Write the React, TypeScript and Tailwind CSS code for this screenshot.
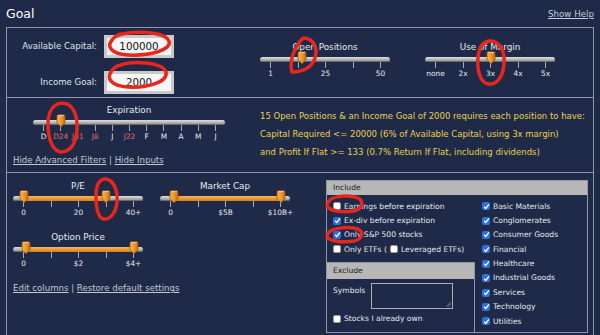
import React from "react";

type Label = { at: number; text: string; red?: boolean };

type SliderProps = {
  title: string;
  w: string;
  width: number;
  ticks: number;
  labels: Label[];
  knobs: number[];
  fill?: [number, number];
};

function Knob({ left }: { left: number }) {
  return (
    <svg
      width="10"
      height="14"
      viewBox="0 0 10 14"
      className="absolute top-[-2px]"
      style={{ left: left - 5 }}
    >
      <defs>
        <linearGradient id="knob" x1="0" y1="0" x2="1" y2="0">
          <stop offset="0" stopColor="#f6b550" />
          <stop offset="0.5" stopColor="#f0982c" />
          <stop offset="1" stopColor="#c86d12" />
        </linearGradient>
      </defs>
      <path
        d="M1 2 Q1 0.8 2.2 0.8 H7.8 Q9 0.8 9 2 V8.6 L5 12.8 L1 8.6 Z"
        fill="url(#knob)"
        stroke="#9a5410"
        strokeWidth="0.8"
      />
      <path d="M2 1.6 H8" stroke="#fbd79a" strokeWidth="0.8" />
    </svg>
  );
}

function Slider({ title, w, width, ticks, labels, knobs, fill }: SliderProps) {
  const step = (width - 20) / (ticks - 1);
  const tickX = Array.from({ length: ticks }, (_, i) => 10 + i * step);
  return (
    <div className={`flex flex-col ${w}`}>
      <div className="h-[12px] text-center text-[8.8px] leading-[12px] text-[#e6e9ef]">
        {title}
      </div>
      <div className="relative h-[28px]">
        <div className="absolute left-0 right-0 top-[4px] h-[5px] rounded-full bg-linear-to-b from-[#e0e0e0] to-[#8a8a8a] shadow-[inset_0_-1px_0_#6a6a6a]" />
        {fill && (
          <div
            className="absolute top-[4px] h-[5px] bg-linear-to-b from-[#f8b657] to-[#d97d1c]"
            style={{ left: fill[0], width: fill[1] - fill[0] }}
          />
        )}
        {tickX.map((x, i) => (
          <div
            key={i}
            className="absolute top-[9px] h-[6px] w-px bg-[#aaaaaa]"
            style={{ left: x }}
          />
        ))}
        {labels.map((l, i) => (
          <div
            key={i}
            className={`absolute top-[16px] -translate-x-1/2 whitespace-nowrap text-[7.4px] leading-[10px] ${
              l.red ? "text-[#e06a6a]" : "text-[#e8e8e8]"
            }`}
            style={{ left: tickX[l.at] + 0.5 }}
          >
            {l.text}
          </div>
        ))}
        {knobs.map((k, i) => (
          <Knob key={i} left={k} />
        ))}
      </div>
    </div>
  );
}

function Check({ on }: { on?: boolean }) {
  if (on) {
    return (
      <span className="flex h-[8px] w-[8px] shrink-0 items-center justify-center rounded-[2px] bg-[#2d6ee0]">
        <svg width="7" height="7" viewBox="0 0 8 8">
          <path d="M1.3 4.3 L3.2 6.2 L6.8 1.6" fill="none" stroke="#fff" strokeWidth="1.5" />
        </svg>
      </span>
    );
  }
  return (
    <span className="h-[8px] w-[8px] shrink-0 rounded-[2px] border border-[#9a9a9a] bg-white" />
  );
}

function Row({ on, children }: { on?: boolean; children: React.ReactNode }) {
  return (
    <div className="flex h-[14.4px] items-center gap-[3px] whitespace-nowrap">
      <Check on={on} />
      <span>{children}</span>
    </div>
  );
}

const sectors = [
  "Basic Materials",
  "Conglomerates",
  "Consumer Goods",
  "Financial",
  "Healthcare",
  "Industrial Goods",
  "Services",
  "Technology",
  "Utilities",
];

export default function App() {
  return (
    <div className="relative h-[335px] w-[600px] overflow-hidden bg-[#1e2a48] font-['DejaVu_Sans',sans-serif] text-[#dfe3ea]">
      <div className="flex h-[27px] items-center justify-between pl-[6px] pr-[6px]">
        <h1 className="text-[12.5px] leading-[16px] text-white">Goal</h1>
        <a className="mt-[2px] text-[8.7px] text-[#c8ccd4] underline">Show Help</a>
      </div>

      <div className="mx-[6px] h-[320px] border border-[#8f97a8]">
        {/* inputs row */}
        <div className="flex h-[70px] border-b border-[#8f97a8]">
          <div className="grid grid-cols-[90px_70px] items-center gap-x-[7px] gap-y-[7px] pt-[4px]">
            <span className="text-right text-[8.6px]">Available Capital:</span>
            <div className="flex h-[23px] items-center justify-center border-[3px] border-[#c9c9c9] bg-[#f7f7f7] text-[10.3px] text-[#111]">
              100000
            </div>
            <span className="text-right text-[8.6px]">Income Goal:</span>
            <div className="flex h-[23px] items-center justify-center border-[3px] border-[#c9c9c9] bg-[#f7f7f7] text-[10.3px] text-[#111]">
              2000
            </div>
          </div>
          <div className="ml-[86px] mt-[13px] flex gap-[35px]">
            <Slider
              title="Open Positions"
              w="w-[130px]"
              width={130}
              ticks={5}
              labels={[
                { at: 0, text: "1" },
                { at: 2, text: "25" },
                { at: 4, text: "50" },
              ]}
              knobs={[42]}
            />
            <Slider
              title="Use of Margin"
              w="w-[130px]"
              width={130}
              ticks={5}
              labels={[
                { at: 0, text: "none" },
                { at: 1, text: "2x" },
                { at: 2, text: "3x" },
                { at: 3, text: "4x" },
                { at: 4, text: "5x" },
              ]}
              knobs={[65.5]}
            />
          </div>
        </div>

        {/* expiration row */}
        <div className="flex h-[75px] border-b border-[#8f97a8]">
          <div className="flex w-[253px] flex-col pl-[6px] pt-[6px]">
            <div className="ml-[20px]">
              <Slider
                title="Expiration"
                w="w-[192px]"
                width={192}
                ticks={11}
                labels={[
                  { at: 0, text: "D" },
                  { at: 1, text: "D24", red: true },
                  { at: 2, text: "J31", red: true },
                  { at: 3, text: "J8", red: true },
                  { at: 4, text: "J" },
                  { at: 5, text: "J22", red: true },
                  { at: 6, text: "F" },
                  { at: 7, text: "M" },
                  { at: 8, text: "A" },
                  { at: 9, text: "M" },
                  { at: 10, text: "J" },
                ]}
                knobs={[27.5]}
              />
            </div>
            <div className="mt-[10px] text-[8.6px] leading-[12px] text-[#c4c8d0]">
              <a className="underline">Hide Advanced Filters</a> | <a className="underline">Hide Inputs</a>
            </div>
          </div>
          <div className="pt-[9px] text-[8.5px] leading-[18px] text-[#ebd14e]">
            <p>15 Open Positions &amp; an Income Goal of 2000 requires each position to have:</p>
            <p>Capital Required &lt;= 20000 (6% of Available Capital, using 3x margin)</p>
            <p>and Profit If Flat &gt;= 133 (0.7% Return If Flat, including dividends)</p>
          </div>
        </div>

        {/* filters row */}
        <div className="flex">
          <div className="flex w-[319px] flex-col pl-[6px] pt-[7px]">
            <div className="flex gap-[17px]">
              <Slider
                title="P/E"
                w="w-[130px]"
                width={130}
                ticks={5}
                labels={[
                  { at: 0, text: "0" },
                  { at: 2, text: "20" },
                  { at: 4, text: "40+" },
                ]}
                knobs={[10.5, 93]}
                fill={[10, 93]}
              />
              <Slider
                title="Market Cap"
                w="w-[130px]"
                width={130}
                ticks={5}
                labels={[
                  { at: 0, text: "0" },
                  { at: 2, text: "$5B" },
                  { at: 4, text: "$10B+" },
                ]}
                knobs={[14, 120.5]}
                fill={[14, 120]}
              />
            </div>
            <div className="mt-[11px]">
              <Slider
                title="Option Price"
                w="w-[130px]"
                width={130}
                ticks={5}
                labels={[
                  { at: 0, text: "0" },
                  { at: 2, text: "$2" },
                  { at: 4, text: "$4+" },
                ]}
                knobs={[12.5, 120.5]}
                fill={[12, 120]}
              />
            </div>
            <div className="mt-[11px] text-[8.6px] leading-[12px] text-[#c4c8d0]">
              <a className="underline">Edit columns</a> | <a className="underline">Restore default settings</a>
            </div>
          </div>

          <div className="mt-[7px] flex h-[153px] w-[262px] flex-col border border-[#8f97a8] text-[7.6px] text-[#e4e7ee]">
            <div className="flex h-[14px] items-center bg-[#b7b7b7] pl-[6px] text-[#1c1c1c]">Include</div>
            <div className="flex flex-1">
              <div className="flex w-[148px] flex-col">
                <div className="pl-[6px] pt-[4px]">
                  <Row>Earnings before expiration</Row>
                  <Row on>Ex-div before expiration</Row>
                  <Row on>Only S&amp;P 500 stocks</Row>
                  <div className="flex h-[14.4px] items-center gap-[3px] whitespace-nowrap">
                    <Check />
                    <span>Only ETFs (</span>
                    <Check />
                    <span>Leveraged ETFs)</span>
                  </div>
                </div>
                <div className="mt-[5px] flex flex-1 flex-col border-r border-t border-[#8f97a8]">
                  <div className="flex h-[16px] items-center bg-[#b7b7b7] pl-[6px] text-[#1c1c1c]">Exclude</div>
                  <div className="flex items-start gap-[6px] pl-[6px] pt-[4px]">
                    <span className="mt-[2px]">Symbols</span>
                    <div className="relative h-[26px] w-[82px] border border-[#a8aebb] bg-[#1e2a48]">
                      <svg width="5" height="5" viewBox="0 0 5 5" className="absolute bottom-[1px] right-[1px]">
                        <path d="M4.5 0.5 L0.5 4.5 M4.5 2.5 L2.5 4.5" stroke="#b0b0b0" strokeWidth="0.7" />
                      </svg>
                    </div>
                  </div>
                  <div className="mt-[3px] pl-[6px]">
                    <Row>Stocks I already own</Row>
                  </div>
                </div>
              </div>
              <div className="pl-[7px] pt-[4px]">
                {sectors.map((s) => (
                  <Row key={s} on>
                    {s}
                  </Row>
                ))}
              </div>
            </div>
          </div>
        </div>
      </div>

      {/* red annotations */}
      <svg
        width="600"
        height="335"
        viewBox="0 0 600 335"
        className="pointer-events-none absolute left-0 top-0"
        fill="none"
        stroke="#e8261c"
        strokeWidth="3.5"
        strokeLinecap="round"
      >
        <path d="M116 36 C132 30 164 31 169 41 C172 50 150 56 128 55 C112 54 106 47 112 40 C114 37 118 35 120 34" />
        <path d="M118 66 C132 60 162 62 166 72 C168 82 148 88 128 87 C112 86 106 79 111 72 C113 68 116 66 121 65" />
        <path d="M304 38 C314 39 318 48 315 58 C312 68 302 72 292 72 C290 66 291 56 296 48 C299 42 301 39 304 38" />
        <path d="M489 41 C500 40 505 52 504 64 C503 77 497 85 488 84 C479 82 477 68 478 57 C479 47 483 42 489 41" />
        <path d="M62 103 C73 103 78 116 77 130 C76 144 70 152 61 152 C52 151 48 138 48 124 C48 112 53 104 62 103" />
        <path d="M104 179 C113 178 118 190 117 202 C116 213 110 220 104 219 C98 218 96 207 96 196 C96 186 99 180 104 179" />
        <path d="M328 203 C330 196 348 194 358 198 C364 201 363 209 354 211 C342 213 330 211 327 206" />
        <path d="M328 234 C330 228 348 226 358 229 C364 232 363 239 354 241 C342 243 330 241 327 237" />
      </svg>
    </div>
  );
}
